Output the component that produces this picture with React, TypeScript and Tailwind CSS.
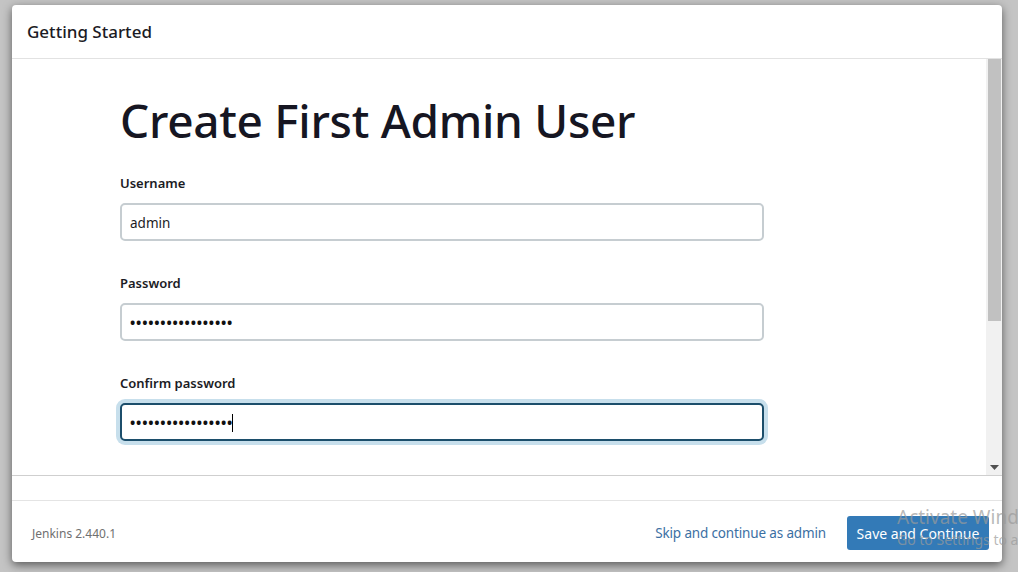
import React from "react";

const font = { fontFamily: '"Noto Sans", "Open Sans", sans-serif' };

function Field({ label, value, password, focused }: { label: string; value: string; password?: boolean; focused?: boolean }) {
  return (
    <div className="flex flex-col">
      <div className="text-[13px] font-semibold text-[#1b1b24] leading-[18px] h-[18px]">{label}</div>
      <div className="h-[11px]" />
      <div
        className={
          focused
            ? "w-[644px] h-[38px] rounded-[5px] border-2 border-[#1c4e6b] bg-white shadow-[0_0_0_4px_#c7dfec] flex items-center px-[8px] pt-[2px]"
            : "w-[644px] h-[38px] rounded-[5px] border-2 border-[#c6cdd1] bg-white flex items-center px-[8px] pt-[2px]"
        }
      >
        {password ? (
          <div className="flex items-center">
            <span className="text-[14px] tracking-[0.8px] font-bold text-[#111] leading-none">{value}</span>
            {focused && <span className="w-[1px] h-[18px] bg-black ml-[-1px]" />}
          </div>
        ) : (
          <span className="text-[13.5px] text-[#1b1b24]">{value}</span>
        )}
      </div>
    </div>
  );
}

export default function App() {
  const dots = "•".repeat(17);
  return (
    <div className="w-[1018px] h-[572px] bg-[#c4c4c4] relative overflow-hidden" style={font}>
      <div className="absolute left-[12px] top-[5px] w-[990px] h-[557px] bg-white rounded-[4px] shadow-[0_3px_10px_rgba(0,0,0,0.55)] flex flex-col overflow-hidden">
        <div className="h-[54px] border-b border-[#e2e2e2] flex items-center pl-[15px] shrink-0">
          <span className="text-[17px] text-[#1b1b24] font-medium">Getting Started</span>
        </div>
        <div className="h-[417px] flex shrink-0 border-b border-[#cfcfcf]">
          <div className="flex-1 pl-[108px] pt-[31px] overflow-hidden">
            <h1 className="text-[46px] leading-[60px] font-medium text-[#161622] tracking-[-0.3px]">Create First Admin User</h1>
            <div className="h-[24px]" />
            <div className="flex flex-col gap-[33px]">
              <Field label="Username" value="admin" />
              <Field label="Password" value={dots} password />
              <Field label="Confirm password" value={dots} password focused />
            </div>
          </div>
          <div className="w-[16px] bg-[#f1f1f1] flex flex-col items-center pt-0 pb-[4px]">
            <div className="w-[13px] h-[262px] bg-[#c1c1c1]" />
            <div className="flex-1" />
            <svg width="9" height="6" viewBox="0 0 9 6"><path d="M0 0 H9 L4.5 5 Z" fill="#505050" /></svg>
          </div>
        </div>
        <div className="h-[25px] border-b border-[#e4e4e4] shrink-0" />
        <div className="flex-1 flex items-center pl-[20px] pr-[13px] pt-[3px]">
          <span className="text-[12px] text-[#707070] pt-[2px]">Jenkins 2.440.1</span>
          <div className="flex-1" />
          <span className="text-[13.5px] text-[#3b6fa3] mr-[21px] tracking-[-0.15px]">Skip and continue as admin</span>
          <button className="w-[142px] h-[34px] bg-[#337ab7] rounded-[3px] text-white text-[14px]">Save and Continue</button>
        </div>
      </div>
      <div className="absolute left-[897px] top-[505px] text-[19px] text-[#9a9a9a]/70 leading-[24px] whitespace-nowrap pointer-events-none">Activate Windows</div>
      <div className="absolute left-[897px] top-[530px] text-[14px] text-[#9a9a9a]/70 leading-[20px] whitespace-nowrap pointer-events-none">Go to Settings to activate Windows.</div>
    </div>
  );
}
